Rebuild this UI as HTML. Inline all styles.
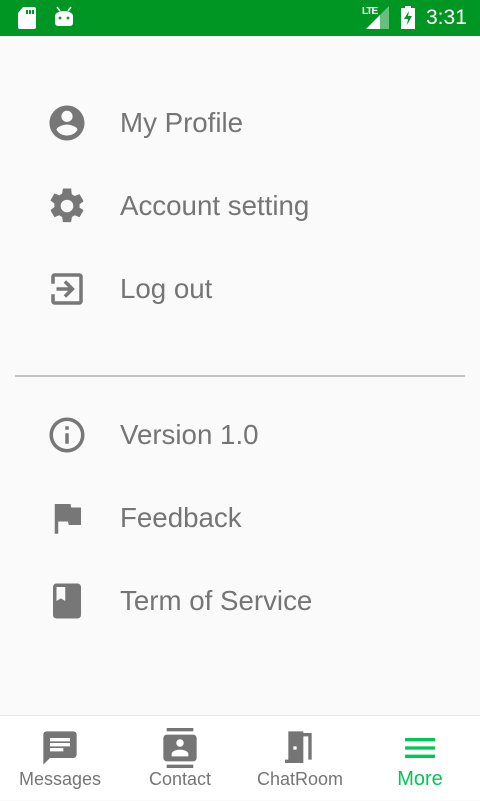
<!DOCTYPE html>
<html><head><meta charset="utf-8"><style>
*{margin:0;padding:0;box-sizing:border-box}
body{width:480px;height:800px;background:#fafafa;font-family:"Liberation Sans",sans-serif;position:relative;overflow:hidden}
.sb{position:absolute;top:0;left:0;width:480px;height:36px;background:#009624}
.item{position:absolute;left:0;width:480px;height:40px}
.item svg{position:absolute;left:46px;top:-1px;width:42px;height:42px;fill:#777}
.item span{position:absolute;left:120px;top:4px;font-size:27.7px;color:#757575}
.div{position:absolute;left:15px;top:375px;width:450px;height:2px;background:#c4c4c4}
.nav{position:absolute;left:0;top:715px;width:480px;height:85px;background:#fff;border-top:1px solid #e6e6e6}
.tab{position:absolute;top:0;width:120px;height:85px;text-align:center}
.tab svg{position:absolute;left:40px;top:12px;width:40px;height:40px;fill:#757575}
.tab span{position:absolute;left:0;width:120px;top:53px;font-size:18px;color:#757575}
</style></head><body>
<div class="sb">
<svg style="position:absolute;left:17px;top:7px" width="20" height="22" viewBox="0 0 20 22"><path d="M6 0h11a2 2 0 0 1 2 2v18a2 2 0 0 1-2 2H3a2 2 0 0 1-2-2V6z" fill="#fff"/><rect x="9" y="3" width="2" height="4" fill="#009624"/><rect x="12" y="3" width="2" height="4" fill="#009624"/><rect x="15" y="3" width="2" height="4" fill="#009624"/></svg>
<svg style="position:absolute;left:53px;top:6px" width="22" height="22" viewBox="0 0 22 22"><path d="M4 1l3 4M18 1l-3 4" stroke="#fff" stroke-width="1.5"/><path d="M2 10a9 5 0 0 1 18 0v7a3 3 0 0 1-3 3H5a3 3 0 0 1-3-3z" fill="#fff"/><circle cx="7" cy="12" r="1.4" fill="#009624"/><circle cx="15" cy="12" r="1.4" fill="#009624"/></svg>
<span style="position:absolute;left:362px;top:6px;color:#fff;font-size:10px;font-weight:bold;letter-spacing:-1px">LTE</span>
<svg style="position:absolute;left:366px;top:6px" width="23" height="23" viewBox="0 0 23 23"><path d="M23 0V23H0z" fill="#fff" opacity=".4"/><path d="M14 9V23H0z" fill="#fff"/></svg>
<svg style="position:absolute;left:401px;top:6px" width="14" height="23" viewBox="0 0 14 23"><path d="M4 0h6v2h4v21H0V2h4z" fill="#fff"/><path d="M8 5L3 13h4l-1 6 5-9H7z" fill="#009624"/></svg>
<span style="position:absolute;left:426px;top:6px;color:#fff;font-size:21px">3:31</span>
</div>

<div class="item" style="top:103px"><svg viewBox="0 0 24 24"><path d="M12 2C6.5 2 2 6.5 2 12s4.5 10 10 10 10-4.5 10-10S17.5 2 12 2zm0 3a3.2 3.2 0 1 1 0 6.4A3.2 3.2 0 0 1 12 5zm0 14.2a7.2 7.2 0 0 1-6-3.2c0-2 4-3.1 6-3.1s6 1.1 6 3.1a7.2 7.2 0 0 1-6 3.2z"/></svg><span>My Profile</span></div>
<div class="item" style="top:186px"><svg viewBox="0 0 24 24"><path d="M19.14 12.94a7 7 0 0 0 0-1.88l2.03-1.58a.5.5 0 0 0 .12-.61l-1.92-3.32a.5.5 0 0 0-.59-.22l-2.39.96a7 7 0 0 0-1.62-.94l-.36-2.54A.5.5 0 0 0 13.92 2h-3.84a.5.5 0 0 0-.5.42l-.36 2.54a7 7 0 0 0-1.62.94l-2.390-.96a.5.5 0 0 0-.59.22L2.7 8.48a.5.5 0 0 0 .12.61l2.03 1.58a7 7 0 0 0 0 1.88l-2.03 1.58a.5.5 0 0 0-.12.61l1.92 3.32c.12.22.37.29.59.22l2.39-.96c.5.38 1.04.7 1.62.94l.36 2.54c.05.24.25.42.5.42h3.84c.25 0 .45-.18.5-.42l.36-2.54a7 7 0 0 0 1.62-.94l2.39.96c.22.08.47 0 .59-.22l1.92-3.32a.5.5 0 0 0-.12-.61zM12 15.6A3.6 3.6 0 1 1 12 8.4a3.6 3.6 0 0 1 0 7.2z"/></svg><span>Account setting</span></div>
<div class="item" style="top:269px"><svg viewBox="0 0 24 24"><path d="M10.1 15.6l1.4 1.4 5-5-5-5-1.4 1.4 2.6 2.6H6v2h6.7zM19 3H5a2 2 0 0 0-2 2v4h2V5h14v14H5v-4H3v4a2 2 0 0 0 2 2h14a2 2 0 0 0 2-2V5a2 2 0 0 0-2-2z"/></svg><span>Log out</span></div>

<div class="div"></div>

<div class="item" style="top:415px"><svg viewBox="0 0 24 24"><path d="M11 7h2v2h-2zm0 4h2v6h-2zm1-9C6.5 2 2 6.5 2 12s4.5 10 10 10 10-4.5 10-10S17.5 2 12 2zm0 18a8 8 0 1 1 0-16 8 8 0 0 1 0 16z"/></svg><span>Version 1.0</span></div>
<div class="item" style="top:498px"><svg viewBox="0 0 24 24"><path d="M14.4 6L14 4H5v17h2v-7h5.6l.4 2h7V6z"/></svg><span>Feedback</span></div>
<div class="item" style="top:581px"><svg viewBox="0 0 24 24"><path d="M18 2H6a2 2 0 0 0-2 2v16a2 2 0 0 0 2 2h12a2 2 0 0 0 2-2V4a2 2 0 0 0-2-2zM6 4h5v8l-2.5-1.5L6 12z"/></svg><span>Term of Service</span></div>

<div class="nav">
<div class="tab" style="left:0"><svg viewBox="0 0 24 24"><path d="M20 2H4a2 2 0 0 0-2 2v18l4-4h14a2 2 0 0 0 2-2V4a2 2 0 0 0-2-2zM6 9h12v2H6zm8 5H6v-2h8zm4-6H6V6h12z"/></svg><span>Messages</span></div>
<div class="tab" style="left:120px"><svg viewBox="0 0 24 24"><path d="M20 0H4v2h16zM4 24h16v-2H4zM20 4H4a2 2 0 0 0-2 2v12a2 2 0 0 0 2 2h16a2 2 0 0 0 2-2V6a2 2 0 0 0-2-2zm-8 2.75a2.25 2.25 0 1 1 0 4.5 2.25 2.25 0 0 1 0-4.5zM17 17H7v-1.5c0-1.67 3.33-2.5 5-2.5s5 .83 5 2.5z"/></svg><span>Contact</span></div>
<div class="tab" style="left:240px"><svg viewBox="0 0 24 24"><path d="M14 19V5h3v14h2V3h-5V2H5v17H3v2h11zm-4-6h-2v-2h2z"/></svg><span>ChatRoom</span></div>
<div class="tab" style="left:360px"><svg viewBox="0 0 24 24" style="fill:#00c853"><path d="M3 18h18v-2H3zm0-5h18v-2H3zm0-7v2h18V6z"/></svg><span style="color:#00c853;font-size:20px;top:52px">More</span></div>
</div>
</body></html>
